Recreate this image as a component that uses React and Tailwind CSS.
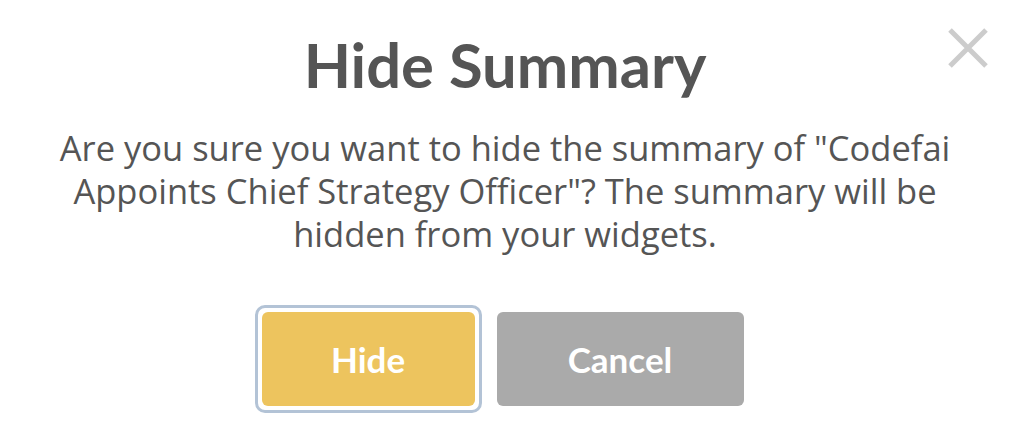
import React from 'react';

const HideSummaryModal = () => {
  return (
    <div className="relative w-[1010px] h-[442px] bg-white flex flex-col items-center" style={{ fontFamily: '"Open Sans", Lato, sans-serif' }}>
      <button className="absolute top-[28px] right-[22px] w-[40px] h-[40px]">
        <svg viewBox="0 0 40 40" className="w-full h-full" stroke="#cccccc" strokeWidth="5" fill="none">
          <path d="M2 2L38 38M38 2L2 38" />
        </svg>
      </button>

      <h1 className="mt-[28px] text-[61.5px] leading-[72px] font-bold text-[#555555] font-['Lato',sans-serif]">Hide Summary</h1>

      <p className="mt-[26px] text-center text-[34.5px] leading-[43px] text-[#555555]">
        Are you sure you want to hide the summary of "Codefai
        <br />
        Appoints Chief Strategy Officer"? The summary will be
        <br />
        hidden from your widgets.
      </p>

      <div className="mt-[50px] mr-[12px] flex items-center gap-[15px] font-['Lato',sans-serif]">
        <div className="rounded-[10px] border-[3px] border-[#b3c3d6] p-[4px]">
          <button className="w-[213px] h-[94px] rounded-[6px] bg-[#edc45e] text-white text-[35px] font-bold">Hide</button>
        </div>
        <button className="w-[247px] h-[94px] rounded-[6px] bg-[#aaaaaa] text-white text-[35px] font-bold">Cancel</button>
      </div>
    </div>
  );
};

export default function App() {
  return <HideSummaryModal />;
}
